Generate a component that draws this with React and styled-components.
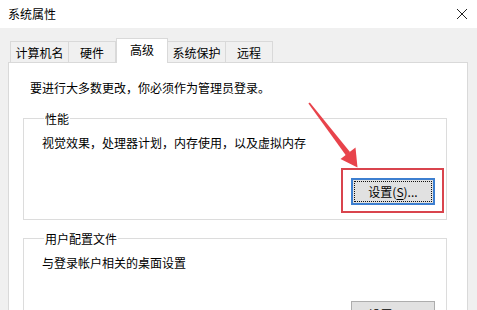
import React from 'react';
import styled, { createGlobalStyle } from 'styled-components';

const GlobalStyle = createGlobalStyle`
    html, body {
        margin: 0;
        padding: 0;
        overflow: hidden;
        background: #f0f0f0;
    }
    body {
        font-family: "Noto Sans CJK SC", "Noto Sans", sans-serif;
        font-size: 12px;
        color: #000;
    }
`

const tabs = [
    { label: '计算机名', w: 59 },
    { label: '硬件', w: 48 },
    { label: '高级', w: 52, active: true },
    { label: '系统保护', w: 59 },
    { label: '远程', w: 48 },
];

function Button({ focused, children }) {
    return (
        <Btn $focused={focused}>
            {focused && <FocusRing />}
            {children}
        </Btn>
    );
}

function App() {
    return (
        <Window>
            <GlobalStyle />
            <TitleBar>
                <Title>系统属性</Title>
                <CloseBtn>
                    <svg width="12" height="12" viewBox="0 0 12 12">
                        <path d="M1 1 L11 11 M11 1 L1 11" stroke="#222" strokeWidth="1" fill="none" />
                    </svg>
                </CloseBtn>
            </TitleBar>
            <Body>
                <TabRow>
                    {tabs.map((t) => (
                        <Tab key={t.label} $w={t.w} $active={t.active}>{t.label}</Tab>
                    ))}
                </TabRow>
                <Panel>
                    <Intro>要进行大多数更改，你必须作为管理员登录。</Intro>
                    <Group>
                        <Legend>性能</Legend>
                        <GroupText>视觉效果，处理器计划，内存使用，以及虚拟内存</GroupText>
                        <ButtonRow>
                            <Highlight>
                                <Button focused>设置(<u>S</u>)...</Button>
                                <RedBox />
                            </Highlight>
                        </ButtonRow>
                    </Group>
                    <Group $second>
                        <Legend>用户配置文件</Legend>
                        <GroupText>与登录帐户相关的桌面设置</GroupText>
                        <ButtonRow $top={30}>
                            <Button>设置(<u>E</u>)...</Button>
                        </ButtonRow>
                    </Group>
                </Panel>
            </Body>
            <Arrow viewBox="0 0 477 310" width="477" height="310">
                <polygon
                    points="308.4,103.6 309.8,102.5 350,152 346,155.5"
                    fill="#e8434b"
                />
                <polygon points="357.5,167.5 340.5,159 355.5,147.5" fill="#e8434b" />
            </Arrow>
        </Window>
    );
}

export default App;

const Window = styled.div`
    position: relative;
    width: 477px;
    height: 310px;
    overflow: hidden;
    background: #f0f0f0;
`

const TitleBar = styled.div`
    height: 28px;
    background: #fff;
    display: flex;
    align-items: center;
    justify-content: space-between;
    padding: 0 9px 0 8px;
    box-sizing: border-box;
`

const Title = styled.div`
    font-size: 12px;
    line-height: 16px;
`

const CloseBtn = styled.div`
    width: 12px;
    height: 12px;
    display: flex;
    margin-top: -1px;
`

const Body = styled.div`
    padding: 0 9px 0 8px;
`

const TabRow = styled.div`
    height: 34px;
    display: flex;
    align-items: flex-end;
    padding-left: 2px;
`

const Tab = styled.div`
    position: relative;
    box-sizing: border-box;
    width: ${(p) => p.$w}px;
    height: ${(p) => (p.$active ? 25 : 21)}px;
    margin-left: ${(p) => (p.$active ? 0 : -1)}px;
    margin-bottom: ${(p) => (p.$active ? -1 : 0)}px;
    z-index: ${(p) => (p.$active ? 2 : 1)};
    background: ${(p) => (p.$active ? '#fff' : '#f0f0f0')};
    border: 1px solid #d9d9d9;
    border-bottom: none;
    display: flex;
    justify-content: center;
    align-items: ${(p) => (p.$active ? 'flex-start' : 'center')};
    padding-top: ${(p) => (p.$active ? 3 : 1)}px;
    line-height: 16px;
    &:first-child {
        margin-left: 0;
    }
`

const Panel = styled.div`
    position: relative;
    height: 260px;
    background: #fff;
    border: 1px solid #d9d9d9;
    padding: 17px 0 0 14px;
    box-sizing: border-box;
`

const Intro = styled.div`
    line-height: 16px;
    padding-left: 7px;
`

const Group = styled.fieldset`
    width: 424px;
    box-sizing: border-box;
    margin: ${(p) => (p.$second ? 11 : 15)}px 0 0 0;
    padding: 0 11px 14px 12px;
    border: 1px solid #dcdcdc;
    min-width: 0;
`

const Legend = styled.legend`
    padding: 0 1px;
    margin-left: 8px;
    line-height: 15px;
`

const GroupText = styled.div`
    line-height: 16px;
    margin-top: 9px;
    padding-left: 6px;
`

const ButtonRow = styled.div`
    display: flex;
    justify-content: flex-end;
    margin-top: ${(p) => p.$top ?? 27}px;
`

const Highlight = styled.div`
    position: relative;
    display: flex;
`

const RedBox = styled.div`
    position: absolute;
    top: -10px;
    left: -10px;
    right: -9px;
    bottom: -8px;
    border: 2px solid #d9444d;
    pointer-events: none;
`

const Btn = styled.div`
    position: relative;
    box-sizing: border-box;
    width: 84px;
    height: 27px;
    background: #e1e1e1;
    border: ${(p) => (p.$focused ? '2px solid #3d7fd0' : '1px solid #adadad')};
    display: flex;
    align-items: center;
    justify-content: center;
    line-height: 16px;
    u {
        text-decoration-thickness: 1px;
        text-underline-offset: 2px;
    }
`

const FocusRing = styled.span`
    position: absolute;
    inset: 1px;
    border: 1px dotted #111;
`

const Arrow = styled.svg`
    position: absolute;
    left: 0;
    top: 0;
    pointer-events: none;
`
